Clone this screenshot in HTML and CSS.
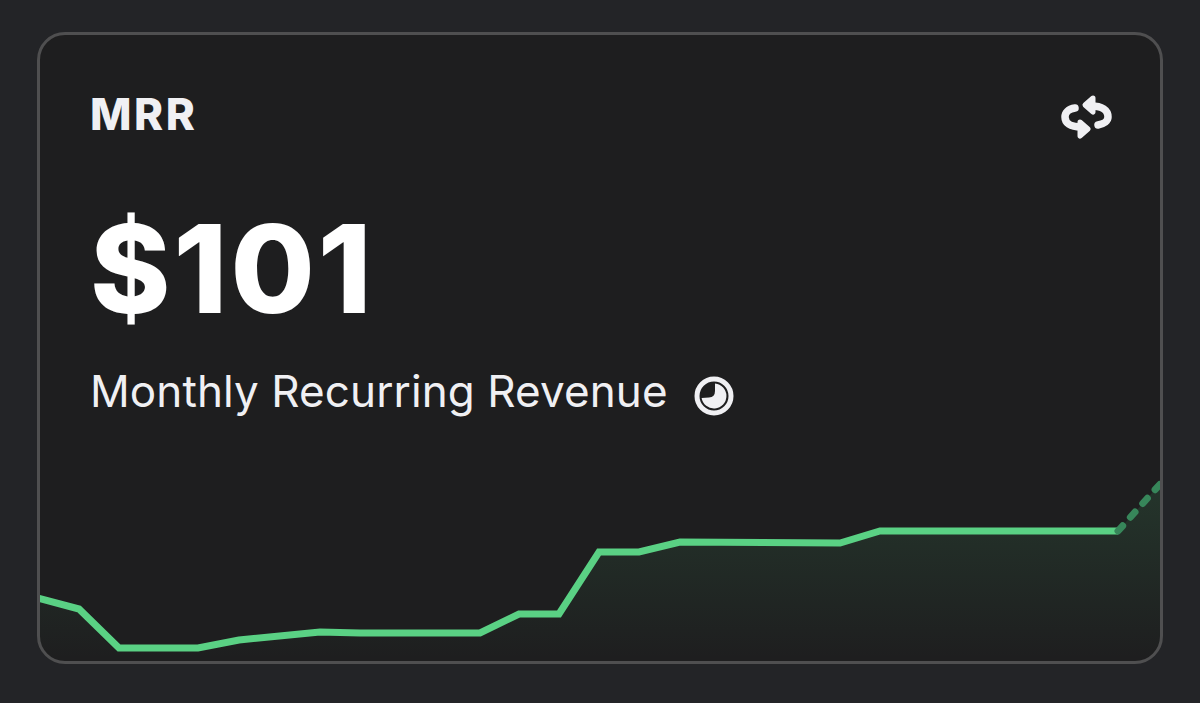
FILE: index.html
```html
<!DOCTYPE html>
<html lang="en">
<head>
    <meta charset="UTF-8">
    <title>MRR</title>
    <link rel="stylesheet" href="styles.css">
</head>
<body>

<div class="card">
    <div class="card-head">
        <span class="card-title">MRR</span>
        <svg class="icon-cycle" viewBox="0 0 52 44" fill="none" stroke="#f0f0f3" stroke-width="7.5" stroke-linecap="round" stroke-linejoin="round">
            <path d="M15 13 C8 14 5 18 5 22 C5 28 10 32 21 32"/>
            <path d="M20 27 L28 34 L20 41 Z" fill="#f0f0f3" stroke-width="5"/>
            <path d="M38 30 C44 29 48 26 48 22 C48 15 42 11 31 11"/>
            <path d="M33 3 L25 10 L33 17 Z" fill="#f0f0f3" stroke-width="5"/>
        </svg>
    </div>
    <div class="card-value">$101</div>
    <div class="card-sub">
        <span>Monthly Recurring Revenue</span>
        <svg class="icon-pie" viewBox="0 0 40 40">
            <circle cx="20" cy="20" r="17" fill="none" stroke="#f0f0f3" stroke-width="5"/>
            <path d="M21 7.5 A12.5 12.5 0 1 1 7.6 22 L15 21.5 Q21 21 21 15 Z" fill="#f0f0f3"/>
        </svg>
    </div>
    <svg class="chart" viewBox="40 472 1120 189" width="1120" height="189">
        <defs>
            <linearGradient id="fade" gradientUnits="userSpaceOnUse" x1="0" y1="484" x2="0" y2="659">
                <stop offset="0" stop-color="#4fd17f" stop-opacity="0.13"/>
                <stop offset="1" stop-color="#4fd17f" stop-opacity="0"/>
            </linearGradient>
        </defs>
        <path fill="url(#fade)" d="M38 598 L79 609 L119 648 L198 648 L239 640 L320 632 L360 633 L480 633 L519 614 L559 614 L599 552 L639 552 L680 542 L840 543 L880 531 L1118 531 L1160 484 L1160 661 L38 661 Z"/>
        <path class="line" d="M38 598 L79 609 L119 648 L198 648 L239 640 L320 632 L360 633 L480 633 L519 614 L559 614 L599 552 L639 552 L680 542 L840 543 L880 531 L1118 531"/>
        <path class="line-dash" d="M1118 531 L1162 482"/>
    </svg>
</div>

</body>
</html>
```

FILE: styles.css
```css
html, body { height: 100%; }
body {
    margin: 0;
    background: #232427;
    font-family: Inter, sans-serif;
    color: #f0f0f3;
    padding: 32px 37px 39px 37px;
    box-sizing: border-box;
}

.card {
    height: 100%;
    box-sizing: border-box;
    background: #1e1e1f;
    border: 3px solid #4f4f50;
    border-radius: 28px;
    overflow: hidden;
    display: flex;
    flex-direction: column;
    padding-top: 59px;
}

.card-head {
    display: flex;
    justify-content: space-between;
    align-items: center;
    padding: 0 48px 0 50px;
    height: 46px;
}
.card-title { font-size: 44px; font-weight: 800; letter-spacing: 2.5px; margin-bottom: 6px; }
.icon-cycle { width: 52px; height: 44px; }

.card-value {
    font-size: 122px;
    font-weight: 800;
    line-height: 122px;
    letter-spacing: 3px;
    color: #fff;
    padding-left: 50px;
    margin-top: 68px;
}

.card-sub {
    display: flex;
    align-items: center;
    gap: 26px;
    padding-left: 50px;
    margin-top: 36px;
    font-size: 44px;
    letter-spacing: 0.1px;
    line-height: 50px;
}
.icon-pie { width: 40px; height: 40px; margin-top: 10px; }

.chart { display: block; margin-top: auto; flex-shrink: 0; }
.line { fill: none; stroke: #5ad184; stroke-width: 7; stroke-linejoin: miter; }
.line-dash { fill: none; stroke: #37865a; stroke-width: 7; stroke-dasharray: 7 11.5; stroke-linecap: round; }
```
